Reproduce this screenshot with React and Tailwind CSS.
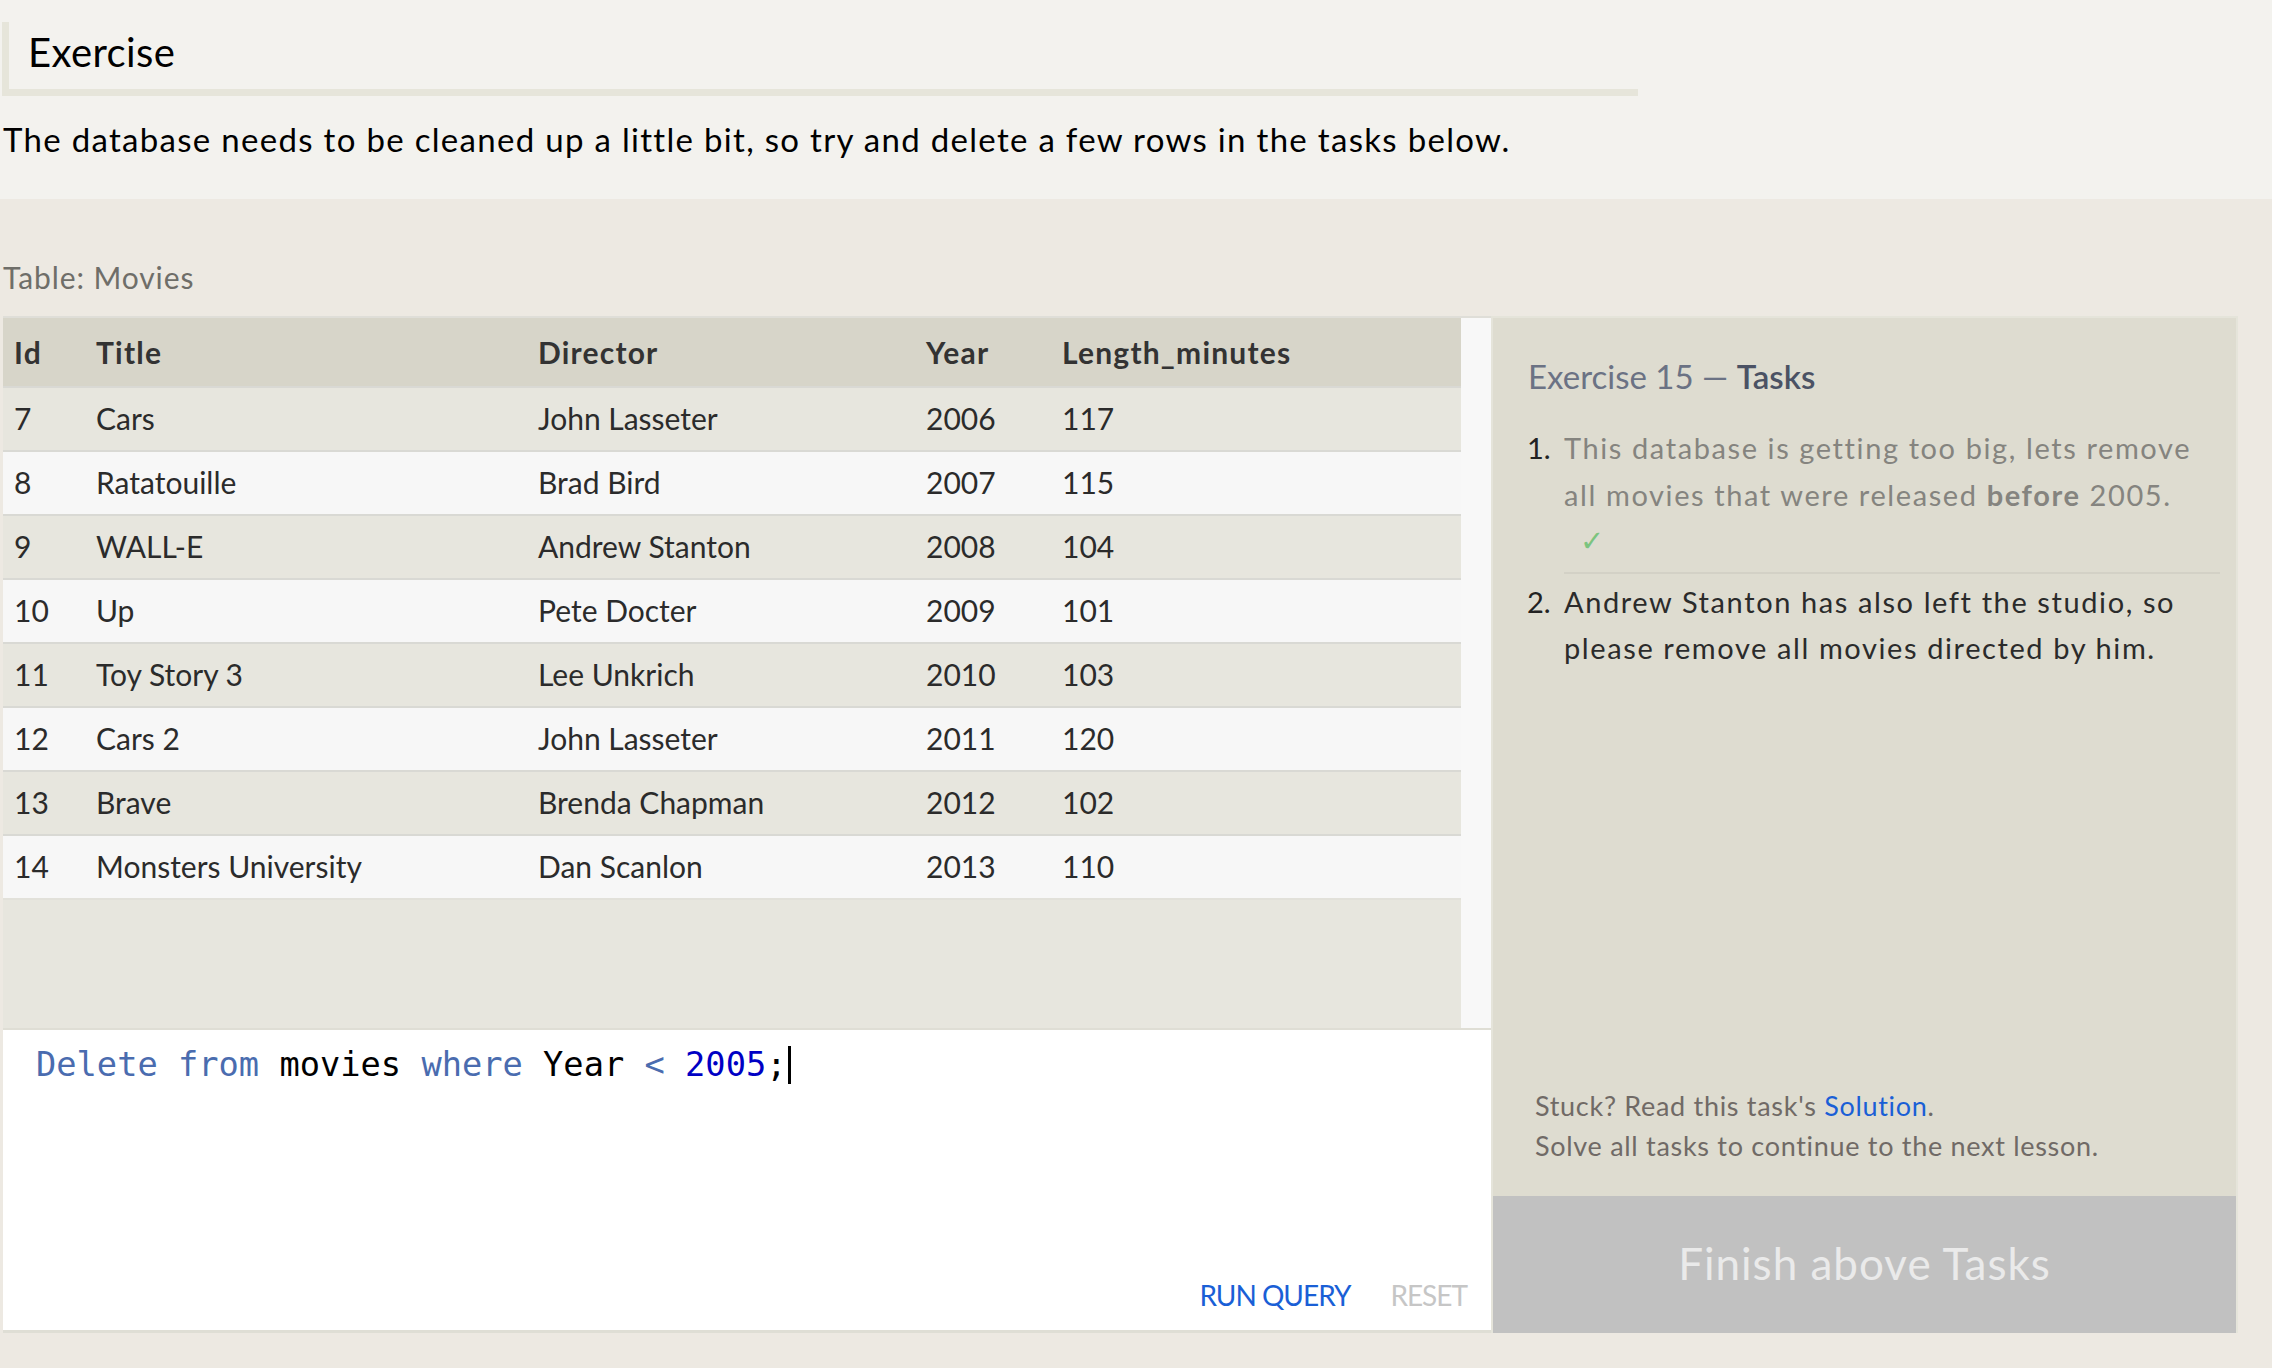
const movies = [
  [7, 'Cars', 'John Lasseter', 2006, 117],
  [8, 'Ratatouille', 'Brad Bird', 2007, 115],
  [9, 'WALL-E', 'Andrew Stanton', 2008, 104],
  [10, 'Up', 'Pete Docter', 2009, 101],
  [11, 'Toy Story 3', 'Lee Unkrich', 2010, 103],
  [12, 'Cars 2', 'John Lasseter', 2011, 120],
  [13, 'Brave', 'Brenda Chapman', 2012, 102],
  [14, 'Monsters University', 'Dan Scanlon', 2013, 110],
];

const cols = 'grid grid-cols-[82px_442px_388px_136px_1fr]';

function MoviesTable() {
  return (
    <div className="flex-1 flex flex-col bg-[#e7e6de] border-t-2 border-[#dfded8]">
      <div className={`${cols} h-[68px] items-center bg-[#d7d5c9] font-bold text-[30px] tracking-[1.2px] text-[#333]`}>
        <div className="pl-[11px]">Id</div>
        <div className="pl-[11px]">Title</div>
        <div className="pl-[11px]">Director</div>
        <div className="pl-[11px]">Year</div>
        <div className="pl-[11px]">Length_minutes</div>
      </div>
      {movies.map((m, i) => (
        <div
          key={m[0]}
          className={`${cols} h-[64px] items-center border-t-2 border-[#d9d9d4] text-[30px] text-[#2b2b2b] ${
            i % 2 === 0 ? 'bg-[#e7e6de]' : 'bg-[#f7f7f7]'
          }`}
        >
          {m.map((v, j) => (
            <div key={j} className="pl-[11px] pb-[2px]">
              {v}
            </div>
          ))}
        </div>
      ))}
      <div className="flex-1 border-t-2 border-[#e2e1da]" />
    </div>
  );
}

function Editor() {
  return (
    <div className="h-[305px] bg-white border-t-2 border-b-[3px] border-[#dfded5] flex flex-col">
      <div className="pl-[33px] pt-[15px] font-['DejaVu_Sans_Mono',monospace] text-[33.7px] leading-[40px] text-black whitespace-pre flex items-center">
        <span className="text-[#4a6caf]">Delete from </span>
        <span>movies </span>
        <span className="text-[#4a6caf]">where </span>
        <span>Year </span>
        <span className="text-[#4a6caf]">&lt; </span>
        <span className="text-[#0000c4]">2005</span>
        <span>;</span>
        <span className="inline-block w-[3px] h-[38px] bg-black ml-[1px]" />
      </div>
      <div className="flex-1" />
      <div className="flex justify-end gap-[40px] pr-[24px] pb-[17px] text-[28px] leading-[36px] tracking-[-1px]">
        <span className="text-[#1a5fd6]">RUN QUERY</span>
        <span className="text-[#c6c6c6]">RESET</span>
      </div>
    </div>
  );
}

function TasksPanel() {
  return (
    <div className="w-[747px] bg-[#dedcd0] border-t-2 border-x-2 border-[#e5e4da] flex flex-col">
      <div className="pl-[35px] pt-[38px] text-[33px] leading-[40px] text-[#6b7284]">
        Exercise 15 — <span className="font-semibold text-[#4b5264]">Tasks</span>
      </div>
      <ol className="mt-[28px] pl-[34px] pr-[16px] text-[29px] text-[#2b2b2b]">
        <li className="flex leading-[47px]">
          <span className="w-[37px] shrink-0 text-[#222]">1.</span>
          <div className="flex-1 tracking-[1.6px]">
            <p className="text-[#85847f]">
              This database is getting too big, lets remove all movies that were released{' '}
              <b className="font-bold">before</b> 2005.
            </p>
            <p className="pl-[16px] text-[#7cc47f] font-['DejaVu_Sans',sans-serif]">✓</p>
            <div className="mt-[7px] border-b-2 border-[#d3d1c6]" />
          </div>
        </li>
        <li className="flex leading-[46px] mt-[5px]">
          <span className="w-[37px] shrink-0 text-[#222]">2.</span>
          <p className="flex-1 pr-[20px] tracking-[1.6px]">
            Andrew Stanton has also left the studio, so please remove all movies directed by him.
          </p>
        </li>
      </ol>
      <div className="flex-1" />
      <div className="pl-[42px] pb-[30px] text-[27px] leading-[40px] tracking-[0.7px] text-[#706a66]">
        <p>
          Stuck? Read this task's <span className="text-[#1a5fd6]">Solution</span>.
        </p>
        <p>Solve all tasks to continue to the next lesson.</p>
      </div>
      <div className="h-[137px] bg-[#c1c1c1] flex items-center justify-center pb-[4px] text-[44px] tracking-[1px] text-[#eaeaea]">
        Finish above Tasks
      </div>
    </div>
  );
}

export default function App() {
  return (
    <div className="min-h-[1368px] bg-[#ede9e2] font-['Lato',sans-serif] text-[#111]">
      <div className="bg-[#f3f2ee] pt-[22px] pb-[40px]">
        <div className="ml-[2px] w-[1636px] border-l-[7px] border-b-[7px] border-[#e6e5da] pt-[6px] pb-[13px] pl-[19px] text-[40px] leading-[48px] tracking-[0.4px] text-black">
          Exercise
        </div>
        <p className="mt-[23px] pl-[3px] text-[33px] leading-[40px] tracking-[1.3px] text-black">
          The database needs to be cleaned up a little bit, so try and delete a few rows in the tasks below.
        </p>
      </div>
      <div className="pt-[60px] pl-[3px] text-[30px] leading-[36px] tracking-[0.9px] text-[#6f6e69]">Table: Movies</div>
      <div className="mt-[21px] flex pl-[3px]">
        <div className="w-[1488px] flex flex-col">
          <div className="h-[712px] flex">
            <MoviesTable />
            <div className="w-[30px] bg-[#f8f8f8] border-t-2 border-[#dfded8]" />
          </div>
          <Editor />
        </div>
        <TasksPanel />
      </div>
    </div>
  );
}
